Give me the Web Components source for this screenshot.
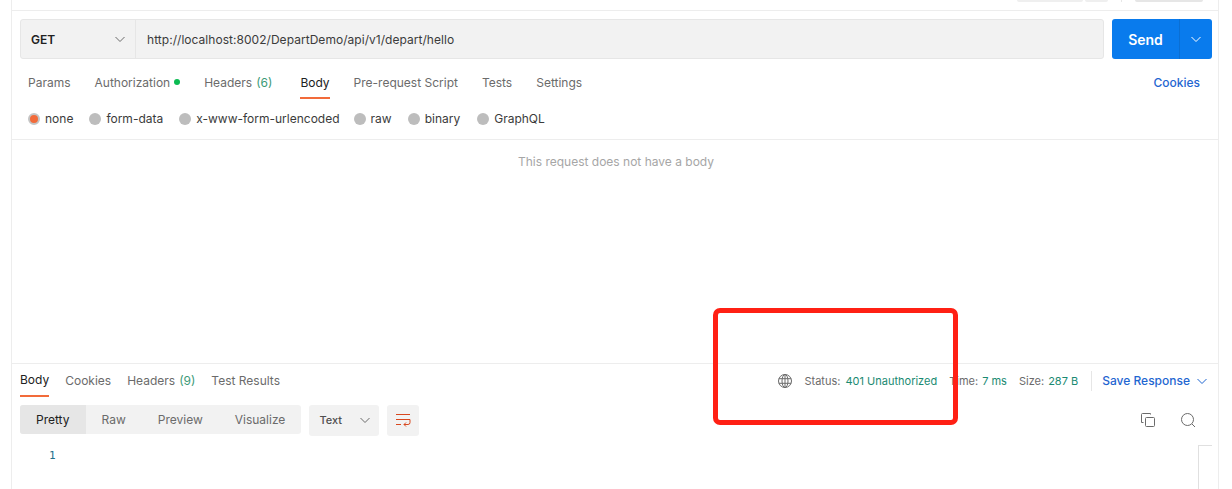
<!DOCTYPE html>
<html>
<head>
<meta charset="utf-8">
<style>
    html, body { margin: 0; padding: 0; background: #fff; }
    body { font-family: Inter, "Liberation Sans", sans-serif; font-size: 12px; color: #6b6b6b; overflow: hidden; }
</style>
</head>
<body>
<pm-workspace>
    <pm-top-strip slot="strip"></pm-top-strip>
    <pm-url-bar slot="request" method="GET" url="http://localhost:8002/DepartDemo/api/v1/depart/hello"></pm-url-bar>
    <pm-request-tabs slot="request"></pm-request-tabs>
    <pm-body-types slot="request"></pm-body-types>
    <pm-empty-body slot="request">This request does not have a body</pm-empty-body>
    <pm-response slot="response"></pm-response>
</pm-workspace>
<pm-highlight></pm-highlight>

<script>
const chevron = (color, size) => `<svg width="${size}" height="${size}" viewBox="0 0 12 12" fill="none" stroke="${color}" stroke-width="1"><path d="M1.5 4l4.5 4.5L10.5 4"/></svg>`;

class PmWorkspace extends HTMLElement {
    constructor() {
        super();
        this.attachShadow({ mode: 'open' }).innerHTML = `
            <style>
                :host { display: flex; flex-direction: column; width: 1208px; height: 489px; margin-left: 11px; box-sizing: border-box;
                    border-left: 1px solid #ededed; border-right: 1px solid #ededed; }
                .strip { height: 10px; border-bottom: 1px solid #ededed; flex: none; }
                .request { height: 352px; flex: none; border-bottom: 1px solid #ededed; }
                .response { flex: 1; min-height: 0; }
            </style>
            <div class="strip"><slot name="strip"></slot></div>
            <div class="request"><slot name="request"></slot></div>
            <div class="response"><slot name="response"></slot></div>
        `;
    }
}

class PmTopStrip extends HTMLElement {
    constructor() {
        super();
        this.attachShadow({ mode: 'open' }).innerHTML = `
            <style>
                :host { display: flex; justify-content: flex-end; height: 2px; padding-right: 15px; overflow: hidden; }
                i { display: block; height: 2px; background: #e6e6e6; border-radius: 0 0 3px 3px; }
            </style>
            <i style="width:66px;background:#efefef"></i>
            <i style="width:23px;margin-left:2px;background:#efefef"></i>
            <i style="width:1px;margin-left:13px"></i>
            <i style="width:68px;margin-left:13px"></i>
        `;
    }
}

class PmUrlBar extends HTMLElement {
    constructor() {
        super();
        this.attachShadow({ mode: 'open' }).innerHTML = `
            <style>
                :host { display: flex; gap: 8px; height: 40px; padding: 8px 6px 0 8px; }
                .field { flex: 1; display: flex; background: #f2f2f2; border: 1px solid #e6e6e6; border-radius: 3px; box-sizing: border-box; }
                .method { width: 115px; flex: none; display: flex; align-items: center; justify-content: space-between; box-sizing: border-box;
                    padding: 0 9px 0 10px; border-right: 1px solid #e6e6e6; font-weight: 600; color: #212121; }
                .url { flex: 1; display: flex; align-items: center; padding-left: 11px; color: #3b3b3b; letter-spacing: .04px; }
                .send { width: 100px; flex: none; display: flex; background: #097bed; border-radius: 3px; color: #fff; }
                .send b { flex: 1; display: flex; align-items: center; justify-content: center; font-size: 14px; font-weight: 600; border-right: 1px solid #0a6fd4; }
                .send span { width: 32px; flex: none; display: flex; align-items: center; justify-content: center; }
            </style>
            <div class="field">
                <div class="method"><span>${this.getAttribute('method')}</span>${chevron('#6b6b6b', 12)}</div>
                <div class="url">${this.getAttribute('url')}</div>
            </div>
            <div class="send"><b>Send</b><span>${chevron('#fff', 12)}</span></div>
        `;
    }
}

class PmRequestTabs extends HTMLElement {
    constructor() {
        super();
        this.attachShadow({ mode: 'open' }).innerHTML = `
            <style>
                :host { display: flex; align-items: stretch; height: 40px; padding: 0 18px 0 16px; box-sizing: border-box; }
                .tab { display: flex; align-items: center; margin-right: 24px; padding-top: 6px; box-sizing: border-box; height: 40px; }
                .tab em { font-style: normal; color: #3c9a78; margin-left: 4px; }
                .on { color: #212121; border-bottom: 2px solid #f26b3a; }
                .on span { position: relative; top: 1px; }
                .dot { width: 6px; height: 6px; border-radius: 50%; background: #0cbb52; margin-left: 4px; }
                .cookies { margin: 0 0 0 auto; color: #1f66d1; font-weight: 500; }
            </style>
            <div class="tab">Params</div>
            <div class="tab">Authorization<span class="dot"></span></div>
            <div class="tab" style="margin-right:28px">Headers<em>(6)</em></div>
            <div class="tab on"><span>Body</span></div>
            <div class="tab">Pre-request Script</div>
            <div class="tab">Tests</div>
            <div class="tab">Settings</div>
            <div class="tab cookies">Cookies</div>
        `;
    }
}

class PmBodyTypes extends HTMLElement {
    constructor() {
        super();
        const items = ['none', 'form-data', 'x-www-form-urlencoded', 'raw', 'binary', 'GraphQL'];
        this.attachShadow({ mode: 'open' }).innerHTML = `
            <style>
                :host { display: flex; align-items: center; gap: 16px; height: 41px; padding: 0 0 1px 16px; box-sizing: border-box; border-bottom: 1px solid #ededed; }
                label { display: flex; align-items: center; gap: 5px; color: #3b3b3b; }
                label:nth-of-type(3) { margin-right: -2px; }
                label:nth-of-type(5) { margin-right: 1px; }
                i { width: 12px; height: 12px; border-radius: 50%; background: #bdbdbd; box-sizing: border-box; }
                .on { background: #f26b3a; border: 2px solid #c4c4c4; }
            </style>
            ${items.map((t, n) => `<label><i class="${n ? '' : 'on'}"></i>${t}</label>`).join('')}
        `;
    }
}

class PmEmptyBody extends HTMLElement {
    constructor() {
        super();
        this.attachShadow({ mode: 'open' }).innerHTML = `
            <style>
                :host { display: block; padding: 14px 0 0 2px; text-align: center; color: #a6a6a6; line-height: 15px; }
            </style>
            <slot></slot>
        `;
    }
}

class PmResponse extends HTMLElement {
    constructor() {
        super();
        this.attachShadow({ mode: 'open' }).innerHTML = `
            <style>
                :host { display: block; }
                .head { display: flex; align-items: stretch; height: 33px; padding: 0 10px 0 8px; box-sizing: border-box; }
                .tab { display: flex; align-items: center; margin-right: 16px; }
                .tab em { font-style: normal; color: #3c9a78; margin-left: 4px; }
                .on { color: #212121; border-bottom: 2px solid #f26b3a; height: 31px; }
                .meta { margin-left: auto; display: flex; align-items: center; }
                .meta span { margin-right: 4px; font-size: 11px; }
                .meta em { font-style: normal; font-size: 11px; color: #1a8a72; margin-right: 12px; }
                .globe { margin-right: 11px; }
                .rule { width: 1px; height: 20px; background: #e6e6e6; margin: 0 10px 0 1px; }
                .save { color: #1f66d1; font-weight: 500; margin-right: 6px; }
                .tools { display: flex; align-items: center; gap: 8px; height: 30px; margin-top: 8px; padding: 0 10px 0 8px; }
                .seg { display: flex; height: 29px; margin-bottom: 1px; background: #f2f2f2; border-radius: 3px; overflow: hidden; }
                .seg div { display: flex; align-items: center; padding: 0 16px; }
                .seg .sel { background: #e6e6e6; color: #212121; }
                .select { display: flex; align-items: center; justify-content: space-between; width: 70px; height: 31px; box-sizing: border-box;
                    padding: 0 8px 0 10px; background: #f2f2f2; border-radius: 3px; font-size: 11px; font-weight: 500; color: #505050; }
                .wrap { width: 32px; height: 31px; display: flex; align-items: center; justify-content: center; background: #f2f2f2; border-radius: 3px; }
                .right { margin-left: auto; display: flex; gap: 24px; padding-right: 12px; }
                .code { display: flex; position: relative; padding: 13px 0 0 37px; font-family: "DejaVu Sans Mono", "Liberation Mono", monospace; font-size: 11px; color: #24708c; line-height: 15px; }
                .scroll { position: absolute; right: 6px; top: 10px; width: 14px; height: 60px; box-sizing: border-box; border-left: 1px solid #e0e0e0; border-top: 1px solid #e0e0e0; }
            </style>
            <div class="head">
                <div class="tab on">Body</div>
                <div class="tab">Cookies</div>
                <div class="tab">Headers<em>(9)</em></div>
                <div class="tab">Test Results</div>
                <div class="meta">
                    <svg class="globe" width="16" height="16" viewBox="0 0 16 16" fill="none" stroke="#6b6b6b"><circle cx="8" cy="8" r="6.5"/><ellipse cx="8" cy="8" rx="3" ry="6.5"/><path d="M8 1.5v13M1.9 5.7h12.2M1.9 10.3h12.2"/></svg>
                    <span style="margin-right:5px">Status:</span><em>401 Unauthorized</em>
                    <span>Time:</span><em>7 ms</em>
                    <span>Size:</span><em>287 B</em>
                    <div class="rule"></div>
                    <div class="save">Save Response</div>
                    ${chevron('#1f66d1', 12)}
                </div>
            </div>
            <div class="tools">
                <div class="seg"><div class="sel">Pretty</div><div>Raw</div><div>Preview</div><div>Visualize</div></div>
                <div class="select"><span>Text</span>${chevron('#6b6b6b', 12)}</div>
                <div class="wrap"><svg width="16" height="16" viewBox="0 0 16 16" fill="none" stroke="#d8481f"><path d="M1 2.5h14M1 7.5h14M1 12.5h5M15 7.5v3a2 2 0 0 1-2 2H9M11 10.5l-2 2 2 2"/></svg></div>
                <div class="right">
                    <svg width="16" height="16" viewBox="0 0 16 16" fill="none" stroke="#6b6b6b"><rect x="5.5" y="5.5" width="9" height="9" rx="1"/><path d="M10.5 2.5v-1h-8a1 1 0 0 0-1 1v8h2"/></svg>
                    <svg width="16" height="16" viewBox="0 0 16 16" fill="none" stroke="#6b6b6b"><circle cx="7.5" cy="7.5" r="6"/><path d="M12 12l3 3"/></svg>
                </div>
            </div>
            <div class="code"><span>1</span><div class="scroll"></div></div>
        `;
    }
}

class PmHighlight extends HTMLElement {
    constructor() {
        super();
        this.attachShadow({ mode: 'open' }).innerHTML = `
            <style>
                :host { position: absolute; left: 713px; top: 308px; width: 245px; height: 117px; box-sizing: border-box;
                    border: 5px solid #ff2014; border-radius: 7px; }
            </style>
        `;
    }
}

customElements.define('pm-workspace', PmWorkspace);
customElements.define('pm-top-strip', PmTopStrip);
customElements.define('pm-url-bar', PmUrlBar);
customElements.define('pm-request-tabs', PmRequestTabs);
customElements.define('pm-body-types', PmBodyTypes);
customElements.define('pm-empty-body', PmEmptyBody);
customElements.define('pm-response', PmResponse);
customElements.define('pm-highlight', PmHighlight);
</script>
</body>
</html>
